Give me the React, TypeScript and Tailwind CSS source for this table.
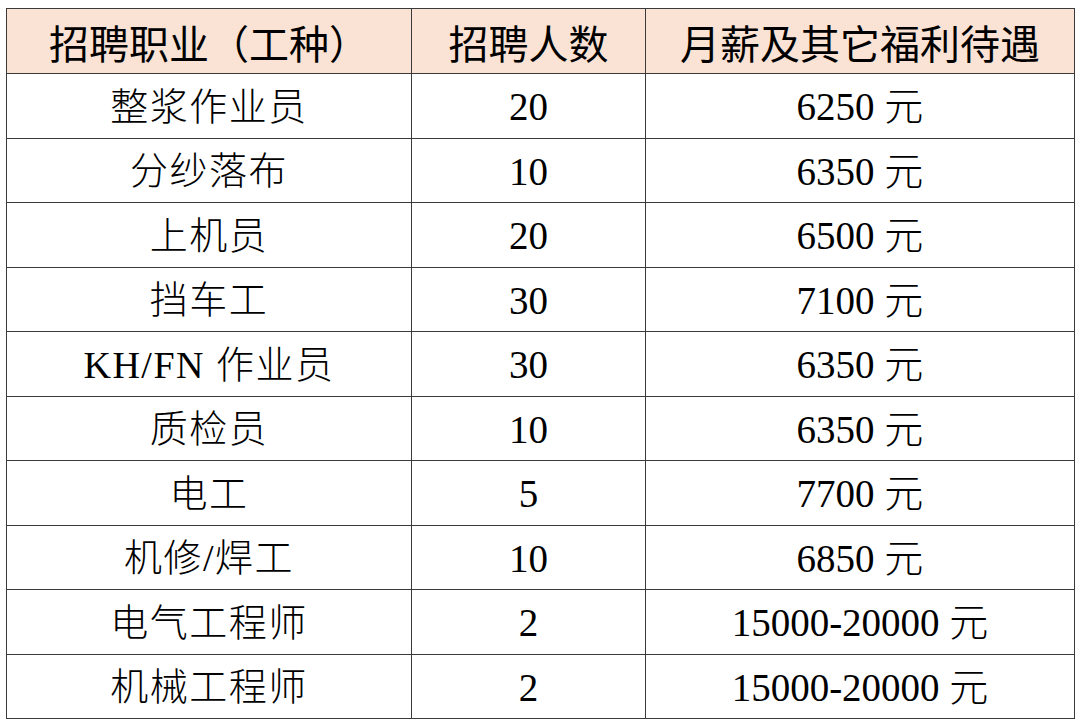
import React from "react";

interface Job {
  name: string;
  count: string;
  pay: string;
}

const jobs: Job[] = [
  { name: "整浆作业员", count: "20", pay: "6250 元" },
  { name: "分纱落布", count: "10", pay: "6350 元" },
  { name: "上机员", count: "20", pay: "6500 元" },
  { name: "挡车工", count: "30", pay: "7100 元" },
  { name: "KH/FN 作业员", count: "30", pay: "6350 元" },
  { name: "质检员", count: "10", pay: "6350 元" },
  { name: "电工", count: "5", pay: "7700 元" },
  { name: "机修/焊工", count: "10", pay: "6850 元" },
  { name: "电气工程师", count: "2", pay: "15000-20000 元" },
  { name: "机械工程师", count: "2", pay: "15000-20000 元" },
];

const headFont = "[font-family:'Noto_Sans_CJK_SC',sans-serif]";
const bodyFont = "[font-family:'Liberation_Serif','Noto_Sans_CJK_SC',serif]";

export default function App() {
  return (
    <div className="w-[1080px] h-[726px] bg-white overflow-hidden pt-[8px] pl-[6px]">
      <table className="w-[1068px] border-collapse table-fixed text-black">
        <colgroup>
          <col className="w-[405px]" />
          <col className="w-[234px]" />
          <col className="w-[429px]" />
        </colgroup>
        <thead>
          <tr className={`h-[65px] bg-[#fae3d5] ${headFont}`}>
            <th className="border-[1.5px] border-[#3a3a3a] text-[40px] font-normal leading-none text-center pt-[2px]">
              招聘职业（工种）
            </th>
            <th className="border-[1.5px] border-[#3a3a3a] text-[40px] font-normal leading-none text-center pt-[2px]">
              招聘人数
            </th>
            <th className="border-[1.5px] border-[#3a3a3a] text-[40px] font-normal leading-none text-center pt-[2px]">
              月薪及其它福利待遇
            </th>
          </tr>
        </thead>
        <tbody className={bodyFont}>
          {jobs.map((job) => (
            <tr key={job.name} className="h-[64.5px]">
              <td className="border-[1.5px] border-[#3a3a3a] text-[38px] font-light leading-none text-center tracking-[1.5px] pt-[2px]">
                {job.name}
              </td>
              <td className="border-[1.5px] border-[#3a3a3a] text-[39px] font-light leading-none text-center pt-[2px]">
                {job.count}
              </td>
              <td className="border-[1.5px] border-[#3a3a3a] text-[39px] font-light leading-none text-center pt-[2px]">
                {job.pay}
              </td>
            </tr>
          ))}
        </tbody>
      </table>
    </div>
  );
}
